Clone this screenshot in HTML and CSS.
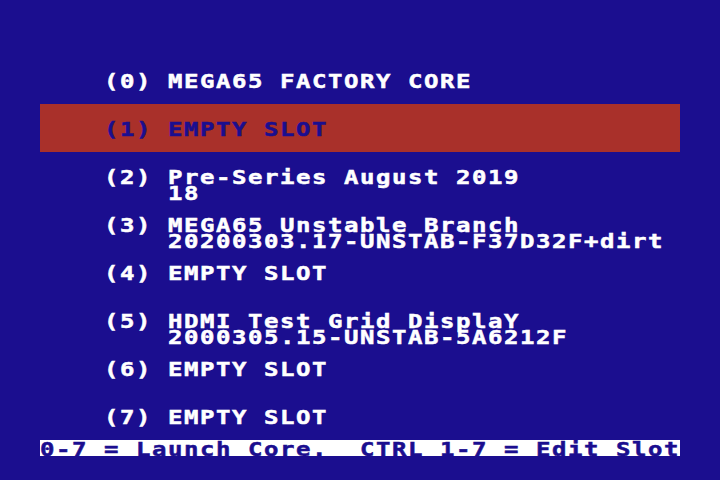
FILE: index.html
```html
<!DOCTYPE html>
<html>
<head>
<meta charset="utf-8">
<link rel="stylesheet" href="styles.css">
</head>
<body>
<div class="screen">
  <div class="slots">
    <div class="slot"><span class="num">(0)</span><span class="name">MEGA65 FACTORY CORE</span></div>
    <div class="slot selected"><span class="num">(1)</span><span class="name">EMPTY SLOT</span></div>
    <div class="slot"><span class="num">(2)</span><span class="name">Pre-Series August 2019<br>18</span></div>
    <div class="slot"><span class="num">(3)</span><span class="name">MEGA65 Unstable Branch<br>20200303.17-UNSTAB-F37D32F+dirt</span></div>
    <div class="slot"><span class="num">(4)</span><span class="name">EMPTY SLOT</span></div>
    <div class="slot"><span class="num">(5)</span><span class="name">HDMI Test Grid DisplaY<br>2000305.15-UNSTAB-5A6212F</span></div>
    <div class="slot"><span class="num">(6)</span><span class="name">EMPTY SLOT</span></div>
    <div class="slot"><span class="num">(7)</span><span class="name">EMPTY SLOT</span></div>
  </div>
  <div class="footer"><span class="ftext">0-7 = Launch Core.  CTRL 1-7 = Edit Slot</span></div>
</div>
</body>
</html>
```

FILE: styles.css
```css
html, body {
  margin: 0;
  padding: 0;
  background: #1b0e8f;
  width: 720px;
  height: 480px;
  overflow: hidden;
}

.screen {
  width: 640px;
  margin-left: 40px;
  padding-top: 56px;
  font-family: "DejaVu Sans Mono", "Liberation Mono", monospace;
  font-weight: bold;
  font-size: 20px;
  line-height: 16px;
  letter-spacing: 1.29px;
  color: #ffffff;
}

.slots {
  display: flex;
  flex-direction: column;
}

.slot {
  height: 48px;
  box-sizing: border-box;
  padding: 17px 0 0 64px;
  display: flex;
  -webkit-text-stroke: 0.5px currentColor;
}

.slot.selected {
  background: #a9302a;
  color: #1b0e8f;
}

.num {
  width: 64px;
  flex: none;
  white-space: pre;
  transform: scaleX(1.2);
  transform-origin: 0 0;
}

.name {
  flex: none;
  white-space: pre;
  transform: scaleX(1.2);
  transform-origin: 0 0;
}

.footer {
  height: 16px;
  padding-top: 1px;
  box-sizing: border-box;
  background: #ffffff;
  color: #1b0e8f;
  -webkit-text-stroke: 0.5px currentColor;
}

.ftext {
  display: inline-block;
  white-space: pre;
  letter-spacing: 1.29px;
  transform: scaleX(1.2);
  transform-origin: 0 0;
}
```
